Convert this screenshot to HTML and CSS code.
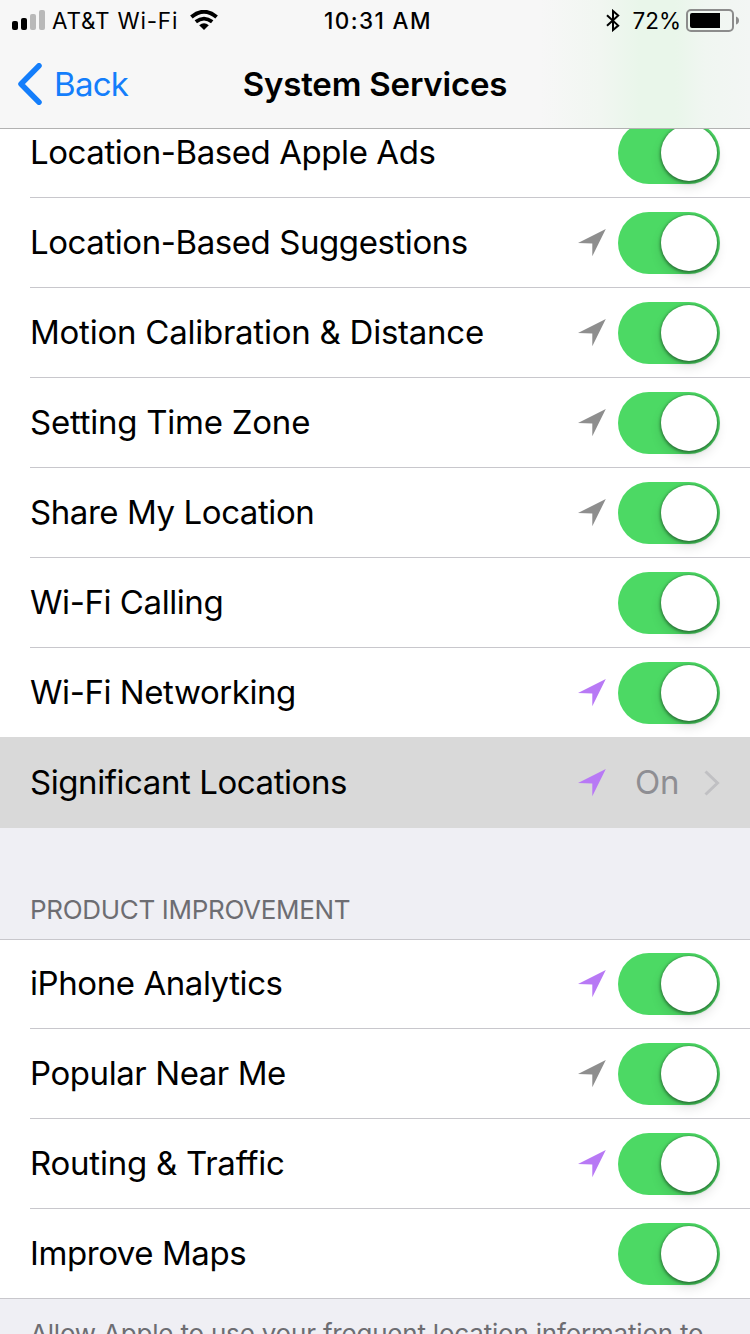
FILE: index.html
```
<!DOCTYPE html>
<html lang="en">
<head>
    <meta charset="UTF-8">
    <meta name="viewport" content="width=device-width, initial-scale=1.0">
    <title>System Services</title>
    <link rel="stylesheet" href="styles.css">
</head>
<body>
    <!-- Shared shapes -->
    <svg class="sprite" width="0" height="0">
        <symbol id="arrow" viewBox="0 0 28 28">
            <path d="M27.8 0L14.3 27.3V14.5L0 14Z"/>
        </symbol>
    </svg>

    <header>
        <div class="status-bar">
            <div class="status-left">
                <svg class="signal" width="33" height="20" viewBox="0 0 33 20">
                    <rect x="0" y="11" width="6" height="9" rx="2"/>
                    <rect x="9" y="8" width="6" height="12" rx="2"/>
                    <rect class="off" x="18" y="4" width="6" height="16" rx="2"/>
                    <rect class="off" x="27" y="0" width="6" height="20" rx="2"/>
                </svg>
                <span class="carrier">AT&amp;T Wi-Fi</span>
                <svg class="wifi" width="28" height="20" viewBox="0 0 28 20">
                    <path d="M1.4 7Q14 -3.4 26.6 7" stroke-width="4"/>
                    <path d="M5.8 11.8Q14 5.4 22.2 11.8" stroke-width="3.8"/>
                    <path class="dot" d="M9.2 15.2Q14 11.4 18.8 15.2L14 20Z"/>
                </svg>
            </div>
            <div class="time">10:31 AM</div>
            <div class="status-right">
                <svg class="bluetooth" width="14" height="23" viewBox="0 0 14 23">
                    <path d="M1 6.2L12.2 16.6L7 21V2L12.2 6.6L1 16.8"/>
                </svg>
                <span class="percent">72%</span>
                <svg class="battery" width="53" height="23" viewBox="0 0 53 23">
                    <rect class="case" x="1" y="1" width="46" height="21" rx="4"/>
                    <path d="M6 4H34V19H6Q4 19 4 17V6Q4 4 6 4Z"/>
                    <path class="cap" d="M50 7.5Q53 8.5 53 11.5T50 15.5Z"/>
                </svg>
            </div>
        </div>
        <nav>
            <a class="back" href="#">
                <svg width="26" height="42" viewBox="0 0 26 42">
                    <path d="M22 2.8L4 21L22 39.2"/>
                </svg>
                <span>Back</span>
            </a>
            <h1>System Services</h1>
        </nav>
    </header>

    <main>
        <ul class="group">
            <li class="row"><span class="label">Location-Based Apple Ads</span><i class="toggle"></i></li>
            <li class="row"><span class="label">Location-Based Suggestions</span><svg class="arrow"><use href="#arrow"/></svg><i class="toggle"></i></li>
            <li class="row"><span class="label loose">Motion Calibration &amp; Distance</span><svg class="arrow"><use href="#arrow"/></svg><i class="toggle"></i></li>
            <li class="row"><span class="label loose">Setting Time Zone</span><svg class="arrow"><use href="#arrow"/></svg><i class="toggle"></i></li>
            <li class="row"><span class="label">Share My Location</span><svg class="arrow"><use href="#arrow"/></svg><i class="toggle"></i></li>
            <li class="row"><span class="label">Wi-Fi Calling</span><i class="toggle"></i></li>
            <li class="row"><span class="label">Wi-Fi Networking</span><svg class="arrow recent"><use href="#arrow"/></svg><i class="toggle"></i></li>
            <li class="row selected">
                <span class="label">Significant Locations</span>
                <svg class="arrow recent"><use href="#arrow"/></svg>
                <span class="value">On</span>
                <svg class="chevron" width="16" height="26" viewBox="0 0 16 26"><path d="M1.5 1.5L13.5 13L1.5 24.5"/></svg>
            </li>
        </ul>

        <h2>PRODUCT IMPROVEMENT</h2>

        <ul class="group bordered">
            <li class="row"><span class="label">iPhone Analytics</span><svg class="arrow recent"><use href="#arrow"/></svg><i class="toggle"></i></li>
            <li class="row"><span class="label">Popular Near Me</span><svg class="arrow"><use href="#arrow"/></svg><i class="toggle"></i></li>
            <li class="row"><span class="label loose">Routing &amp; Traffic</span><svg class="arrow recent"><use href="#arrow"/></svg><i class="toggle"></i></li>
            <li class="row"><span class="label">Improve Maps</span><i class="toggle"></i></li>
        </ul>

        <p class="note">Allow Apple to use your frequent location information to</p>
    </main>
</body>
</html>
```
FILE: styles.css
```
/* Reset */
* {
    margin: 0;
    padding: 0;
    box-sizing: border-box;
}

body {
    width: 750px;
    height: 1334px;
    overflow: hidden;
    font-family: 'Inter', 'Liberation Sans', sans-serif;
    background-color: #efeff4;
    color: #000;
}

.sprite {
    position: absolute;
}

header {
    position: fixed;
    top: 0;
    left: 0;
    width: 750px;
    height: 129px;
    background: linear-gradient(to right, rgba(240, 247, 241, 0) 540px, #f1f6f1 600px, #e9f6ea 640px, #e9f6ea 675px, #f0f6f1 705px, #f3f6f4 750px) #f7f7f7;
    border-bottom: 1px solid #b2b2b2;
    z-index: 10;
}

.status-bar {
    display: grid;
    grid-template-columns: 1fr auto 1fr;
    align-items: center;
    height: 40px;
    padding: 0 11px 0 12px;
    font-size: 22.5px;
    line-height: 40px;
}

.status-left,
.status-right {
    display: flex;
    align-items: center;
}

.status-right {
    justify-content: flex-end;
}

.signal {
    margin-bottom: 1px;
}

.signal .off {
    fill: #b9b9b9;
}

.carrier {
    margin-left: 7px;
    padding-top: 1px;
    letter-spacing: 0.8px;
}

.wifi {
    margin-left: 12px;
    margin-bottom: 2px;
    fill: none;
    stroke: #000;
}

.wifi .dot {
    fill: #000;
    stroke: none;
}

.time {
    padding: 1px 0 0 5px;
    font-weight: 500;
    letter-spacing: 1.4px;
}

.bluetooth {
    fill: none;
    stroke: #000;
    stroke-width: 2;
}

.percent {
    margin: 0 5px 0 12px;
    padding-top: 1px;
}

.battery .case {
    fill: none;
    stroke: #8c8c8c;
    stroke-width: 2;
}

.battery .cap {
    fill: #8c8c8c;
}

nav {
    display: grid;
    grid-template-columns: 1fr auto 1fr;
    align-items: center;
    height: 88px;
}

.back {
    display: flex;
    align-items: center;
    padding-left: 17px;
    gap: 11px;
    font-size: 33px;
    letter-spacing: -0.7px;
    color: #147efb;
    text-decoration: none;
}

.back svg {
    fill: none;
    stroke: #147efb;
    stroke-width: 5.5;
    stroke-linecap: round;
    stroke-linejoin: round;
}

h1 {
    font-size: 33px;
    font-weight: 600;
    letter-spacing: -0.2px;
}

/* Settings list */
main {
    padding-top: 108px;
}

.group {
    list-style: none;
    background-color: #fff;
}

.row {
    display: flex;
    align-items: center;
    height: 90px;
    margin-left: 30px;
    padding-right: 30px;
    box-shadow: inset 0 -1px #c8c7cc;
}

.label {
    flex: 1;
    padding-bottom: 2px;
    font-size: 33px;
    line-height: 40px;
    letter-spacing: -0.43px;
    white-space: nowrap;
}

.label.loose {
    letter-spacing: -0.24px;
}

.arrow {
    width: 28px;
    height: 28px;
    margin-right: 12px;
    fill: #8e8e8e;
}

.arrow.recent {
    fill: #b879f5;
}

.toggle {
    width: 102px;
    height: 62px;
    padding: 3px 2px 3px 43px;
    border-radius: 31px;
    background-color: #4cd964;
}

.toggle::before {
    content: "";
    display: block;
    width: 56px;
    height: 56px;
    border-radius: 50%;
    background-color: #fff;
    box-shadow: 0 1px 3px 1px rgba(0, 0, 0, 0.4), 0 6px 12px rgba(0, 0, 0, 0.12);
}

.row.selected {
    height: 91px;
    margin-top: -1px;
    margin-left: 0;
    padding-left: 30px;
    background-color: #d9d9d9;
    box-shadow: none;
    position: relative;
}

.value {
    margin-left: 17px;
    padding-bottom: 2px;
    font-size: 33px;
    letter-spacing: -0.4px;
    color: #8e8e93;
}

.chevron {
    margin-left: 25px;
    fill: none;
    stroke: #c0c0c3;
    stroke-width: 3;
}

h2 {
    height: 111px;
    padding: 66px 30px 0;
    font-size: 26px;
    font-weight: 400;
    line-height: 32px;
    letter-spacing: -0.32px;
    color: #6d6d72;
}

.group.bordered {
    box-shadow: inset 0 1px #c8c7cc, inset 0 -1px #c8c7cc;
}

.note {
    padding: 17px 30px 0;
    font-size: 26px;
    line-height: 36px;
    letter-spacing: -0.2px;
    color: #6d6d72;
    white-space: nowrap;
}
```
